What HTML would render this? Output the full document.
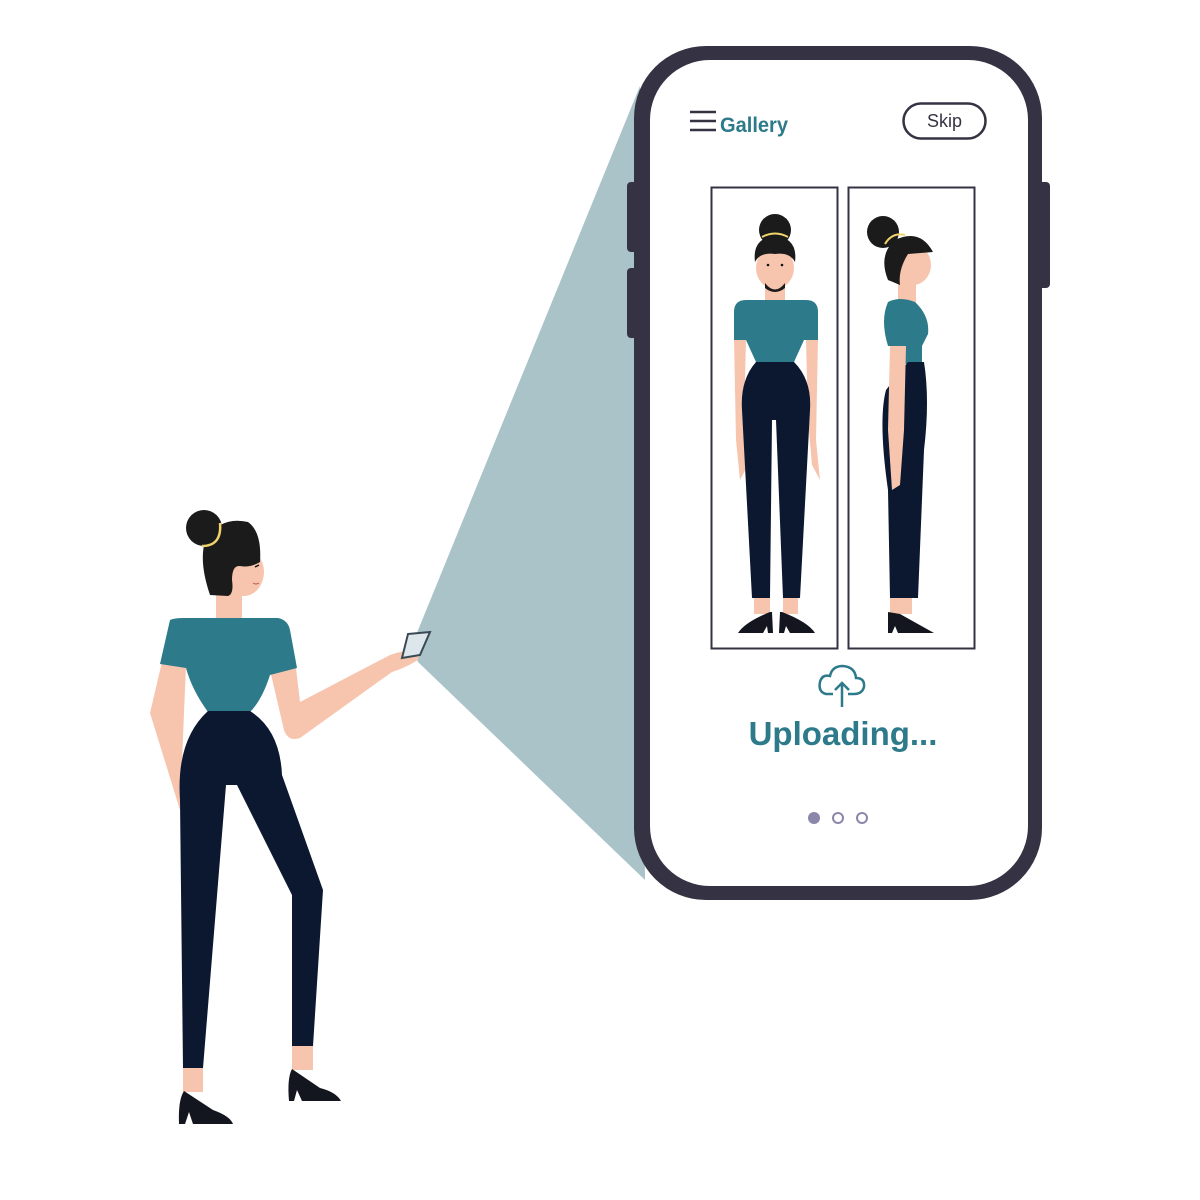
<!DOCTYPE html>
<html><head><meta charset="utf-8"><style>
html,body{margin:0;padding:0;background:#fff;width:1200px;height:1200px;overflow:hidden}
svg{display:block}
text{font-family:"Liberation Sans",sans-serif}
</style></head><body>
<svg width="1200" height="1200" viewBox="0 0 1200 1200" xmlns="http://www.w3.org/2000/svg">
<!-- beam -->
<polygon points="412,645 640,86 645,880 418,662" fill="#a9c3c8"/>
<!-- phone -->
<rect x="627" y="182" width="12" height="70" rx="4" fill="#353343"/>
<rect x="627" y="268" width="12" height="70" rx="4" fill="#353343"/>
<rect x="1036" y="182" width="14" height="106" rx="4" fill="#353343"/>
<rect x="634" y="46" width="408" height="854" rx="72" fill="#353343"/>
<rect x="650" y="60" width="378" height="826" rx="60" fill="#fff"/>
<!-- header -->
<g stroke="#353343" stroke-width="2.5"><line x1="690" y1="112" x2="716" y2="112"/><line x1="690" y1="121" x2="716" y2="121"/><line x1="690" y1="130" x2="716" y2="130"/></g>
<text x="720" y="132" font-size="21" font-weight="bold" fill="#2d7a8b" textLength="68" lengthAdjust="spacingAndGlyphs">Gallery</text>
<rect x="903.5" y="103.5" width="82" height="35" rx="17.5" fill="none" stroke="#353343" stroke-width="2.5"/>
<text x="944.5" y="127" font-size="18" fill="#353343" text-anchor="middle">Skip</text>
<!-- frames -->
<rect x="711.5" y="187.5" width="126" height="461" fill="none" stroke="#353343" stroke-width="2"/>
<rect x="848.5" y="187.5" width="126" height="461" fill="none" stroke="#353343" stroke-width="2"/>
<!-- front figure -->
<g>
<rect x="765" y="278" width="20" height="26" fill="#f7c5ae"/>
<path d="M734,312 Q734,300 746,300 L806,300 Q818,300 818,312 L818,340 L734,340Z" fill="#2d7a8b"/>
<path d="M746,340 L804,340 L794,362 L756,362Z" fill="#2d7a8b"/>
<path d="M734,340 L746,340 L744,420 L748,465 L740,480 L736,440Z" fill="#f7c5ae"/>
<path d="M806,340 L818,340 L816,440 L820,480 L812,465 L808,420Z" fill="#f7c5ae"/>
<path d="M756,362 L794,362 Q812,380 810,410 L800,598 L783,598 L776,420 L772,420 L770,598 L752,598 L742,410 Q740,380 756,362Z" fill="#0b1830"/>
<rect x="754" y="598" width="16" height="16" fill="#f7c5ae"/><rect x="783" y="598" width="15" height="16" fill="#f7c5ae"/>
<path d="M772,612 L773,633 L768,633 L767,626 L763,633 L738,633 Q745,622 770,612Z" fill="#13151f"/>
<path d="M780,612 L779,633 L784,633 L786,626 L790,633 L815,633 Q808,622 782,612Z" fill="#13151f"/>
<ellipse cx="775" cy="268" rx="19" ry="21" fill="#f7c5ae"/>
<path d="M765,283 Q775,296 785,283 L785,288 Q775,296 765,288Z" fill="#1b1b1b"/>
<circle cx="775" cy="230" r="16" fill="#1b1b1b"/>
<path d="M755,262 Q752,238 775,236 Q798,238 795,262 Q790,252 775,254 Q760,252 755,262Z" fill="#1b1b1b"/>
<path d="M762,237 Q775,230 788,237" stroke="#f0d36a" stroke-width="2" fill="none"/>
<circle cx="768" cy="265" r="1.3" fill="#111"/><circle cx="782" cy="265" r="1.3" fill="#111"/>
</g>
<!-- side figure -->
<g>
<rect x="898" y="272" width="18" height="32" fill="#f7c5ae"/>
<path d="M888,302 Q900,296 915,302 Q930,316 928,334 L922,346 L888,346 Q880,320 888,302Z" fill="#2d7a8b"/>
<rect x="890" y="346" width="32" height="18" fill="#2d7a8b"/>
<path d="M908,362 L924,362 Q930,400 924,450 L918,598 L890,598 L888,490 Q878,420 886,390 L908,362Z" fill="#0b1830"/>
<path d="M890,346 L906,346 L904,430 L900,485 L892,490 L888,430Z" fill="#f7c5ae"/>
<rect x="890" y="598" width="22" height="16" fill="#f7c5ae"/>
<path d="M900,614 L934,633 L905,633Z" fill="#13151f"/>
<path d="M888,612 L900,614 L922,633 L898,633 L895,626 L892,633 L888,633Z" fill="#13151f"/>
<ellipse cx="913" cy="265" rx="18" ry="20" fill="#f7c5ae"/>
<circle cx="883" cy="232" r="16" fill="#1b1b1b"/>
<path d="M888,280 Q878,255 895,240 Q920,228 933,252 L908,254 Q898,270 900,285Z" fill="#1b1b1b"/>
<path d="M885,244 Q892,232 905,235" stroke="#f0d36a" stroke-width="2" fill="none"/>
</g>
<!-- upload icon -->
<path d="M833,694 L826,694 Q818,692 820,682 Q822,674 830,676 Q832,666 843,666 Q855,667 856,678 Q865,678 864,687 Q862,694 854,694 L848,694" fill="none" stroke="#2d7a8b" stroke-width="2.5"/>
<path d="M842,707 L842,684 M835,690 L842,683 L849,690" fill="none" stroke="#2d7a8b" stroke-width="2.5"/>
<text x="843" y="745" font-size="33" font-weight="bold" fill="#2d7a8b" text-anchor="middle">Uploading...</text>
<circle cx="814" cy="818" r="6" fill="#8a87aa"/>
<circle cx="838" cy="818" r="5" fill="none" stroke="#8a87aa" stroke-width="2"/>
<circle cx="862" cy="818" r="5" fill="none" stroke="#8a87aa" stroke-width="2"/>
<!-- big woman -->
<rect x="216" y="588" width="26" height="34" fill="#f7c5ae"/>
<path d="M150,713 L162,662 L186,665 L180,810 Z" fill="#f7c5ae"/>
<path d="M270,670 L296,668 L300,702 L390,655 Q410,648 420,652 L418,660 Q405,668 392,672 L300,738 Q288,742 284,730Z" fill="#f7c5ae"/>
<path d="M170,620 Q174,618 184,618 L278,618 Q288,620 290,630 L297,668 L270,675 Q262,700 250,712 L208,712 Q192,690 186,668 L160,664Z" fill="#2d7a8b"/>
<path d="M208,711 L250,711 Q280,730 282,775 L323,890 L313,1046 L292,1046 L292,895 L237,785 L226,785 L203,1068 L183,1068 L180,800 Q176,740 208,711Z" fill="#0b1830"/>
<rect x="183" y="1068" width="20" height="24" fill="#f7c5ae"/><rect x="292" y="1046" width="21" height="24" fill="#f7c5ae"/>
<path d="M184,1091 L213,1110 Q230,1116 233,1124 L193,1124 L189,1112 L185,1124 L179,1124 Q178,1100 184,1091Z" fill="#13151f"/>
<path d="M292,1069 L320,1088 Q336,1092 341,1101 L302,1101 L297,1090 L294,1101 L289,1101 Q287,1078 292,1069Z" fill="#13151f"/>
<path d="M408,634 L430,632 L420,655 L402,658Z" fill="#dde6ea" stroke="#3a4a55" stroke-width="2"/>
<ellipse cx="244" cy="572" rx="20" ry="24" fill="#f7c5ae"/>
<path d="M210,595 Q198,560 206,538 Q222,516 248,522 Q262,532 260,562 Q250,568 240,566 Q232,565 232,580 Q234,594 228,596Z" fill="#1b1b1b"/>
<circle cx="204" cy="528" r="18" fill="#1b1b1b"/>
<path d="M202,546 Q222,546 220,523" stroke="#f0d36a" stroke-width="2.5" fill="none"/>
<path d="M255,567 L259,565" stroke="#111" stroke-width="1.5"/>
<path d="M253,583 Q256,585 259,583" stroke="#b55" stroke-width="1" fill="none"/>
</svg>
</body></html>
